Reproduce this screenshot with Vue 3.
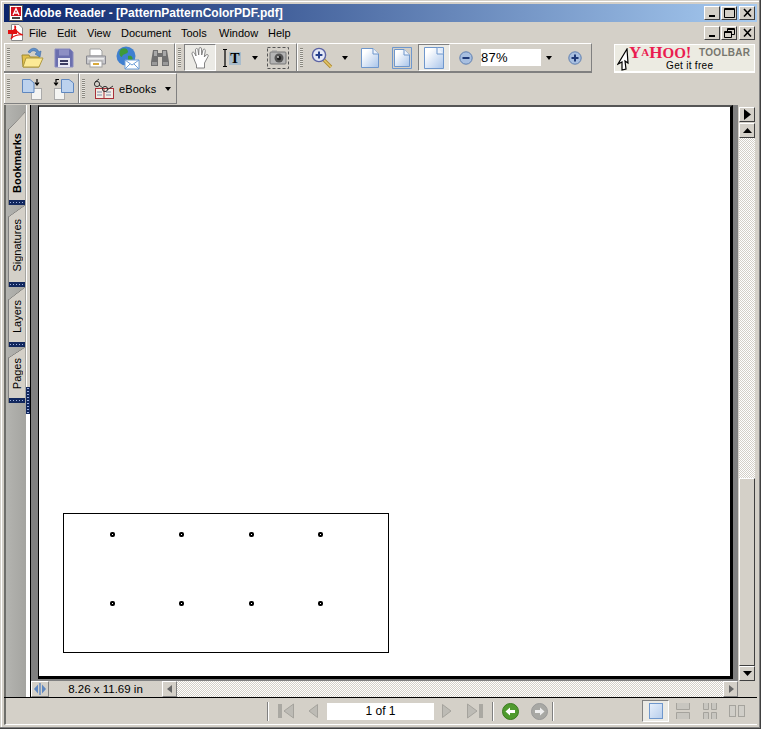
<script setup>
const menus = ['File', 'Edit', 'View', 'Document', 'Tools', 'Window', 'Help']
const tabs = [
  { name: 'Bookmarks', h: 93, cut: 18, pad: 12, bold: true },
  { name: 'Signatures', h: 82, cut: 12, pad: 15 },
  { name: 'Layers', h: 60, cut: 13, pad: 14 },
  { name: 'Pages', h: 56, cut: 11, pad: 14 },
]
const dots = Array.from({ length: 8 }, (_, i) => i)
</script>

<template>
  <div class="window">
    <div class="titlebar">
      <svg class="app-ico" width="16" height="16" viewBox="0 0 16 16"><rect x="1.5" y="0.5" width="13" height="15" fill="#fff" stroke="#555"/><rect x="3" y="2" width="10" height="9" fill="#d0101c"/><path d="M5 10 L8 3.5 L11 10 M6.5 8 H9.5" stroke="#fff" stroke-width="1.3" fill="none"/><rect x="4" y="12" width="8" height="2" fill="#444"/></svg>
      <span class="title-text">Adobe Reader - [PatternPatternColorPDF.pdf]</span>
      <div class="winbtns">
        <span class="wb"><svg width="15" height="14"><rect x="4" y="9" width="6" height="2" fill="#000"/></svg></span>
        <span class="wb"><svg width="15" height="14"><path d="M2.5 2.5 H12.5 V11.5 H2.5 Z M2.5 3.5 H12.5" stroke="#000" fill="none"/></svg></span>
        <span class="wb wb-gap"><svg width="15" height="14"><path d="M4 3 L11 10.5 M11 3 L4 10.5" stroke="#000" stroke-width="1.6"/></svg></span>
      </div>
    </div>

    <div class="menubar">
      <svg class="doc-ico" width="16" height="17" viewBox="0 0 16 17"><path d="M3.5 0.5 H11 L14.5 4 V16.5 H3.5 Z" fill="#fff" stroke="#888"/><path d="M1 8 C6 8 9 3 7 2 C6 5 10 10 15 11 C10 10 5 12 3 15 C5 11 6 8 1 8 Z" fill="none" stroke="#e01010" stroke-width="1.2"/><rect x="0" y="6" width="9" height="4" fill="#e01010"/></svg>
      <span v-for="m in menus" :key="m" class="menu-item">{{ m }}</span>
      <div class="winbtns winbtns-menu">
        <span class="wb"><svg width="15" height="14"><rect x="4" y="9" width="6" height="2" fill="#000"/></svg></span>
        <span class="wb"><svg width="15" height="14"><path d="M5.5 5 V2.5 H12.5 V8.5 H10 M2.5 5.5 H9.5 V11.5 H2.5 Z M2.5 6.5 H9.5 M5.5 3.5 H12.5" stroke="#000" fill="none"/></svg></span>
        <span class="wb wb-gap"><svg width="15" height="14"><path d="M4 3 L11 10.5 M11 3 L4 10.5" stroke="#000" stroke-width="1.6"/></svg></span>
      </div>
    </div>

    <div class="toolrow row1">
      <div class="tgroup g1">
        <i class="grip"></i>
        <span class="tool"><svg width="24" height="24" viewBox="0 0 24 24"><path d="M2 9 H9 L10 11 H19 V21 H3 Z" fill="#e2c04a" stroke="#a08a30"/><path d="M3 21 L6 12 H23 L19 21 Z" fill="#fcea96" stroke="#b09a40"/><path d="M8 6 C11 1 17 1 19 6 L21 5 L20 11 L15 8 L17 7 C15 4 12 4 10 7 Z" fill="#5f8fc8" stroke="#3c6aa4" stroke-width=".6"/></svg></span>
        <span class="tool"><svg width="20" height="20" viewBox="0 0 20 20"><path d="M1 1 H16 L19 4 V19 H1 Z" fill="#6b6fae" stroke="#8a8cc0"/><rect x="5" y="1.5" width="10" height="6" fill="#8d8fc4"/><rect x="4" y="10" width="12" height="9" fill="#e8e8f2"/><rect x="6" y="12" width="8" height="2" fill="#3c3c60"/><rect x="6" y="15" width="8" height="2" fill="#3c3c60"/></svg></span>
        <span class="tool"><svg width="22" height="22" viewBox="0 0 22 22"><path d="M5 9 V2 H15 L17 4 V9 Z" fill="#fff" stroke="#a0a0a0"/><path d="M1.5 9 H20.5 V17 H1.5 Z" fill="#c8c8cc" stroke="#8a8a90"/><rect x="5" y="14" width="12" height="6" fill="#fff" stroke="#a0a0a0"/><rect x="8" y="16" width="6" height="2" fill="#d9a93c"/><rect x="3" y="11" width="16" height="1.5" fill="#eee"/></svg></span>
        <span class="tool"><svg width="24" height="24" viewBox="0 0 24 24"><circle cx="10" cy="10" r="9.5" fill="#3f7fd0"/><path d="M5 3 C9 1 12 3 12 6 C10 9 7 7 6 11 C4 11 2 7 5 3 Z M12 10 C15 9 18 11 16 15 L12 16 Z" fill="#3d9a3a"/><path d="M9 14 H23 V23 H9 Z" fill="#fff" stroke="#6f9fd8"/><path d="M9 14 L16 19 L23 14 M9 23 L14 18 M23 23 L18 18" fill="none" stroke="#6f9fd8"/></svg></span>
        <span class="tool"><svg width="20" height="20" viewBox="0 0 20 20"><path d="M3 2 H8 V5 H12 V2 H17 L19 14 V18 H12 V9 H8 V18 H1 V14 Z" fill="#707070"/><path d="M4 3 H7 V8 H4 Z M13 3 H16 V8 H13 Z" fill="#a8a8a8"/><rect x="2" y="14" width="5" height="3" fill="#9a9a9a"/><rect x="13" y="14" width="5" height="3" fill="#9a9a9a"/></svg></span>
      </div>
      <div class="tgroup g2">
        <i class="grip"></i>
        <span class="tool active"><svg width="20" height="22" viewBox="0 0 20 22"><path d="M4 12 L2 7 C1.5 5 3.5 4.5 4.5 6 L6 9 L5.5 3 C5.5 1 7.8 1 8 3 L8.7 8 L9 1.8 C9.2 0 11.5 0 11.5 2 L11.7 8 L13 3 C13.5 1.5 15.5 2 15.3 3.6 L14.3 10 L16 8 C17.2 6.8 19 8 18 9.5 L14.5 16 V21 H6.5 V18 C5.5 16 4.8 14 4 12 Z" fill="#fff" stroke="#777" stroke-width=".9"/></svg></span>
        <span class="tool"><svg width="20" height="20" viewBox="0 0 20 20"><rect x="7" y="4" width="12" height="13" fill="#a9bccb"/><path d="M1 1.5 H5 M1 18.5 H5 M3 1.5 V18.5" stroke="#000" stroke-width="1.2" fill="none"/><text x="13" y="15" class="ico-t">T</text></svg></span>
        <span class="caret-slot"><i class="caret"></i></span>
        <span class="tool"><svg width="22" height="22" viewBox="0 0 22 22"><rect x=".5" y=".5" width="21" height="21" fill="none" stroke="#555" stroke-dasharray="3 2"/><rect x="3" y="5" width="16" height="12" rx="1" fill="#b4b4b4" stroke="#777"/><rect x="5" y="3.5" width="5" height="2" fill="#999"/><circle cx="12" cy="11" r="4.5" fill="#555"/><circle cx="12" cy="11" r="2.2" fill="#222"/><circle cx="11" cy="10" r=".9" fill="#ddd"/></svg></span>
      </div>
      <div class="tgroup g3">
        <i class="grip"></i>
        <span class="tool"><svg width="22" height="22" viewBox="0 0 22 22"><path d="M12 12 L20 20" stroke="#b08a30" stroke-width="3.4"/><path d="M12 12 L20 20" stroke="#e4c86a" stroke-width="1.6"/><circle cx="8" cy="8" r="6.6" fill="#e4e8f6" stroke="#5b63a4" stroke-width="1.4"/><path d="M4.6 8 H11.4 M8 4.6 V11.4" stroke="#26408c" stroke-width="2"/></svg></span>
        <span class="caret-slot"><i class="caret"></i></span>
        <span class="tool page-first"><svg width="20" height="22" viewBox="0 0 20 22"><defs><linearGradient id="pg" x1="0" y1="0" x2="1" y2="1"><stop offset=".2" stop-color="#fff"/><stop offset="1" stop-color="#a8c4ea"/></linearGradient></defs><path d="M1.5 1.5 H13 L18.5 7 V20.5 H1.5 Z" fill="url(#pg)" stroke="#6f97cc"/><path d="M13 1.5 V7 H18.5" fill="#eef3fb" stroke="#6f97cc"/></svg></span>
        <span class="tool"><svg width="20" height="22" viewBox="0 0 20 22"><path d="M.5 .5 H19.5 V21.5 H.5 Z" fill="none" stroke="#6f97cc"/><path d="M2.5 2.5 H12 L17.5 8 V19.5 H2.5 Z" fill="url(#pg)" stroke="#6f97cc"/><path d="M12 2.5 V8 H17.5" fill="#eef3fb" stroke="#6f97cc"/></svg></span>
        <span class="tool active"><svg width="20" height="22" viewBox="0 0 20 22"><path d="M.5 .5 H19.5 V21.5 H.5 Z" fill="url(#pg)" stroke="#6f97cc"/><path d="M13 .5 V7 H19.5" fill="#eef3fb" stroke="#6f97cc"/></svg></span>
        <span class="zoom-slot"><svg width="14" height="14" viewBox="0 0 14 14"><circle cx="7" cy="7" r="6.2" fill="#a8bfe0" stroke="#5f7fb0"/><rect x="3.5" y="6" width="7" height="2" fill="#1f3a78"/></svg></span>
        <span class="zoom-input">87%</span>
        <span class="caret-slot wide"><i class="caret"></i></span>
        <span class="zoom-slot plus"><svg width="14" height="14" viewBox="0 0 14 14"><circle cx="7" cy="7" r="6.2" fill="#a8bfe0" stroke="#5f7fb0"/><path d="M3.5 7 H10.5 M7 3.5 V10.5" stroke="#1f3a78" stroke-width="2"/></svg></span>
      </div>
      <div class="yahoo">
        <svg class="y-cursor" width="13" height="23" viewBox="0 0 13 23"><path d="M10 1 L11 15 L8 13 L9 21 L5 22 L5 14 L1 16 Z" fill="#fff" stroke="#000" stroke-width="1.2"/></svg>
        <div class="y-text">
          <div class="y-line"><span class="y-logo"><b>Y</b><small>A</small><b>H</b>OO<b>!</b></span><span class="y-tool">TOOLBAR</span></div>
          <div class="y-free">Get it free</div>
        </div>
      </div>
    </div>

    <div class="toolrow row2">
      <div class="tgroup g4">
        <i class="grip"></i>
        <span class="tool"><svg width="22" height="22" viewBox="0 0 22 22"><rect x="10.5" y="10.5" width="10" height="11" fill="#f4f4f2" stroke="#aaa"/><path d="M1.5 1.5 H9 L13 5 V14.5 H1.5 Z" fill="#bcd2ee" stroke="#5f87bf"/><path d="M16 1 V6 M14 4.5 L16 7 L18 4.5" stroke="#000" fill="none" stroke-width="1.2"/></svg></span>
        <span class="tool"><svg width="22" height="22" viewBox="0 0 22 22"><rect x="1.5" y="10.5" width="10" height="11" fill="#f4f4f2" stroke="#aaa"/><path d="M8.5 1.5 H16 L20.5 5 V14.5 H8.5 Z" fill="#bcd2ee" stroke="#5f87bf"/><path d="M6 1.5 H3 V6 M1 4.5 L3 7 L5 4.5" stroke="#000" fill="none" stroke-width="1.2"/></svg></span>
      </div>
      <div class="tgroup g5">
        <i class="grip"></i>
        <span class="tool"><svg width="22" height="22" viewBox="0 0 22 22"><rect x="2.5" y="10.5" width="18" height="10" fill="#f2ece4" stroke="#a83038"/><path d="M11 11 V20" stroke="#a83038"/><path d="M4 14 H9 M4 17 H9 M13 14 H18 M13 17 H18" stroke="#7a8aa8"/><circle cx="4" cy="6" r="2.6" fill="none" stroke="#333"/><circle cx="12" cy="11" r="2.6" fill="none" stroke="#333"/><path d="M6 7 L10 10 M2 4 L6 1 M14 12 L20 8" stroke="#333" fill="none"/></svg></span>
        <span class="ebooks">eBooks</span>
        <span class="caret-slot ebooks-caret"><i class="caret"></i></span>
      </div>
    </div>

    <div class="main">
      <div class="rail">
        <div v-for="t in tabs" :key="t.name" class="tab" :style="{ height: t.h + 'px', paddingBottom: t.pad + 'px', clipPath: `polygon(0 ${t.cut}px, 100% 0, 100% 100%, 0 100%)` }">
          <svg class="tab-slant" width="17" :height="t.cut" :viewBox="`0 0 17 ${t.cut}`"><path :d="`M0 ${t.cut} L17 0`" stroke="#555" fill="none"/></svg>
          <span class="tab-label" :class="{ bold: t.bold }">{{ t.name }}</span>
          <i class="tab-tip"></i>
        </div>
      </div>
      <div class="splitter"><i class="split-top"></i><i class="split-handle"></i><i class="split-rest"></i></div>
      <div class="viewer">
        <div class="viewport">
          <div class="page">
            <div class="figure">
              <i v-for="d in dots" :key="d" class="dot"></i>
            </div>
          </div>
        </div>
        <div class="hscroll">
          <span class="sbtn split"><svg width="14" height="12" viewBox="0 0 14 12"><path d="M5 1.5 V10.5 L1 6 Z M9 1.5 V10.5 L13 6 Z" fill="#5f87bf"/><path d="M7 0 V12" stroke="#5f87bf" stroke-width="1.4"/></svg></span>
          <span class="readout">8.26 x 11.69 in</span>
          <span class="sbtn arrow"><svg width="8" height="10" viewBox="0 0 8 10"><path d="M6 1 V9 L1 5 Z" fill="#666"/></svg></span>
          <span class="dither"></span>
          <span class="sbtn arrow"><svg width="8" height="10" viewBox="0 0 8 10"><path d="M2 1 V9 L7 5 Z" fill="#666"/></svg></span>
        </div>
      </div>
      <div class="vscroll">
        <span class="vbtn first"><svg width="9" height="11" viewBox="0 0 9 11"><path d="M1 0 V11 L8 5.5 Z" fill="#000"/></svg></span>
        <span class="vbtn"><svg width="9" height="6" viewBox="0 0 9 6"><path d="M0 5 H9 L4.5 0 Z" fill="#000"/></svg></span>
        <span class="vtrack"></span>
        <span class="vthumb"></span>
        <span class="vbtn"><svg width="9" height="6" viewBox="0 0 9 6"><path d="M0 0 H9 L4.5 5 Z" fill="#000"/></svg></span>
      </div>
    </div>

    <div class="status">
      <i class="sep first-sep"></i>
      <span class="nav n1"><svg width="16" height="16" viewBox="0 0 16 16"><rect x="0" y="1" width="4" height="14" fill="#aaa8a2"/><path d="M15.5 1 V15 L6 8 Z" fill="#bdbbb5" stroke="#a5a39d"/></svg></span>
      <span class="nav n2"><svg width="10" height="14" viewBox="0 0 10 14"><path d="M9.5 0.5 V13.5 L1 7 Z" fill="#bdbbb5" stroke="#a5a39d"/></svg></span>
      <span class="page-input">1 of 1</span>
      <span class="nav n3"><svg width="10" height="14" viewBox="0 0 10 14"><path d="M0.5 0.5 V13.5 L9 7 Z" fill="#bdbbb5" stroke="#a5a39d"/></svg></span>
      <span class="nav n4"><svg width="16" height="16" viewBox="0 0 16 16"><rect x="12" y="1" width="4" height="14" fill="#aaa8a2"/><path d="M0.5 1 V15 L10 8 Z" fill="#bdbbb5" stroke="#a5a39d"/></svg></span>
      <i class="sep s2"></i>
      <span class="nav n5"><svg width="17" height="17" viewBox="0 0 17 17"><circle cx="8.5" cy="8.5" r="8" fill="#4f9a2e" stroke="#3a7a20"/><path d="M3.5 8.5 L8 4.5 V7 H13 V10 H8 V12.5 Z" fill="#fff"/></svg></span>
      <span class="nav n6"><svg width="17" height="17" viewBox="0 0 17 17"><circle cx="8.5" cy="8.5" r="8" fill="#a8a8a4" stroke="#999"/><path d="M13.5 8.5 L9 4.5 V7 H4 V10 H9 V12.5 Z" fill="#eee"/></svg></span>
      <i class="sep s3"></i>
      <span class="view-btn active"><svg width="14" height="16" viewBox="0 0 14 16"><defs><linearGradient id="vb" x1="0" y1="0" x2="1" y2="1"><stop offset="0" stop-color="#e8f0fb"/><stop offset="1" stop-color="#b6cdec"/></linearGradient></defs><rect x=".5" y=".5" width="13" height="15" fill="url(#vb)" stroke="#6f97cc"/></svg></span>
      <span class="view-btn"><svg width="14" height="16" viewBox="0 0 14 16"><path d="M.5 0 V6.5 H13.5 V0 M.5 16 V9.5 H13.5 V16" fill="#c8c6c0" stroke="#a5a39d"/></svg></span>
      <span class="view-btn"><svg width="14" height="16" viewBox="0 0 14 16"><path d="M.5 0 V6.5 H5.5 V0 M8.5 0 V6.5 H13.5 V0 M.5 16 V9.5 H5.5 V16 M8.5 16 V9.5 H13.5 V16" fill="#c8c6c0" stroke="#a5a39d"/></svg></span>
      <span class="view-btn"><svg width="16" height="12" viewBox="0 0 16 12"><rect x=".5" y=".5" width="6" height="11" fill="#d0cec8" stroke="#a5a39d"/><rect x="9.5" y=".5" width="6" height="11" fill="#d0cec8" stroke="#a5a39d"/></svg></span>
    </div>
  </div>
</template>

<style scoped>
.window {
  box-sizing: border-box;
  width: 761px;
  height: 729px;
  padding: 4px 3px 2px 4px;
  background: #d4d0c8;
  display: flex;
  flex-direction: column;
  font-family: "Liberation Sans", Arial, sans-serif;
  font-size: 11px;
  color: #000;
  border-right: 1px solid #404040;
  border-bottom: 1px solid #404040;
  box-shadow: inset -1px -1px 0 #808080, inset 1px 1px 0 #d4d0c8, inset 2px 2px 0 #fff;
  overflow: hidden;
}
.titlebar {
  flex: 0 0 18px;
  display: flex;
  align-items: center;
  background: linear-gradient(90deg, #0a246a, #a6caf0);
  padding-left: 4px;
}
.app-ico { flex: none; }
.title-text {
  color: #fff;
  font-weight: 700;
  font-size: 12px;
  white-space: nowrap;
}
.winbtns { margin-left: auto; display: flex; gap: 1px; padding-right: 2px; }
.wb {
  box-sizing: border-box;
  width: 16px;
  height: 14px;
  display: flex;
  align-items: center;
  justify-content: center;
  background: #d4d0c8;
  border: 1px solid;
  border-color: #fff #404040 #404040 #fff;
}
.wb svg { flex: none; margin: -1px; }
.wb-gap { margin-left: 1px; }

.menubar {
  flex: 0 0 21px;
  display: flex;
  align-items: center;
}
.doc-ico { flex: none; margin-left: 4px; margin-right: 5px; }
.menu-item { font-size: 11px; }
.menu-item:nth-of-type(1) { width: 28px; }
.menu-item:nth-of-type(2) { width: 30px; }
.menu-item:nth-of-type(3) { width: 34px; }
.menu-item:nth-of-type(4) { width: 60px; }
.menu-item:nth-of-type(5) { width: 38px; }
.menu-item:nth-of-type(6) { width: 49px; }

.toolrow { display: flex; }
.row1 { flex: 0 0 30px; }
.row2 { flex: 0 0 32px; }
.tgroup {
  box-sizing: border-box;
  display: flex;
  align-items: center;
  height: 100%;
  border-top: 1px solid #fff;
  border-bottom: 2px solid #808080;
  border-right: 1px solid #808080;
  box-shadow: inset 1px 0 0 #fff;
  padding-left: 3px;
}
.row2 .tgroup { border-bottom-width: 1px; height: 31px; }
.g1 { width: 171px; }
.g2 { width: 122px; }
.g3 { width: 295px; }
.g4 { width: 75px; }
.g5 { width: 98px; }
.grip {
  flex: none;
  width: 3px;
  height: 19px;
  margin-right: 6px;
  background: repeating-linear-gradient(180deg, #8a8880 0 1px, #e8e6e0 1px 2px);
}
.g2 .grip, .g3 .grip, .g5 .grip { margin-right: 3px; }
.tool {
  box-sizing: border-box;
  flex: none;
  width: 32px;
  height: 27px;
  display: flex;
  align-items: center;
  justify-content: center;
}
.tool.page-first { margin-left: 2px; }
.tool.active {
  background: #ebeae5;
  border: 1px solid;
  border-color: #808080 #fff #fff #808080;
}
.caret-slot {
  flex: none;
  width: 14px;
  display: flex;
  justify-content: center;
  align-items: center;
}
.caret-slot.wide { width: 16px; }
.caret {
  width: 0;
  height: 0;
  border-left: 3.5px solid transparent;
  border-right: 3.5px solid transparent;
  border-top: 4px solid #000;
}
.zoom-slot {
  flex: none;
  width: 31px;
  display: flex;
  justify-content: center;
  align-items: center;
}
.zoom-slot.plus { margin-left: 2px; }
.zoom-input {
  flex: none;
  width: 60px;
  height: 17px;
  line-height: 17px;
  background: #fff;
  font-size: 13px;
  letter-spacing: .3px;
}
.ico-t {
  font-family: "Liberation Serif", serif;
  font-weight: 700;
  font-size: 14px;
  text-anchor: middle;
  fill: #000;
}
.ebooks { flex: none; width: 40px; font-size: 11px; letter-spacing: .1px; margin-left: -1px; }
.ebooks-caret { margin-left: 2px; }

.yahoo {
  box-sizing: border-box;
  margin-left: 22px;
  width: 141px;
  height: 29px;
  margin-top: 1px;
  background: #ecebe2;
  border: 1px solid #fff;
  border-width: 1px 1px 2px 1px;
  display: flex;
  align-items: center;
}
.y-cursor { flex: none; margin-left: 2px; margin-top: 3px; }
.y-text { margin-left: -1px; }
.y-line { display: flex; align-items: center; height: 14px; line-height: 14px; }
.y-logo {
  font-family: "Liberation Serif", serif;
  font-size: 15px;
  font-weight: 700;
  color: #ea1c50;
  width: 70px;
  white-space: nowrap;
}
.y-logo b { font-size: 17px; }
.y-logo small { font-size: 11px; vertical-align: 2px; }
.y-tool {
  font-size: 10px;
  font-weight: 700;
  color: #77776f;
  letter-spacing: .3px;
  white-space: nowrap;
}
.y-free {
  font-size: 10px;
  line-height: 11px;
  text-align: center;
  letter-spacing: .3px;
  white-space: nowrap;
}

.main {
  box-sizing: border-box;
  flex: 0 0 593px;
  display: flex;
  min-height: 0;
  border-bottom: 1px solid #000;
}
.rail {
  box-sizing: border-box;
  width: 22px;
  border-left: 2px solid #6e6e6a;
  background: linear-gradient(90deg, #b4b4b0, #a4a4a0);
  padding: 7px 0 0 2px;
  display: flex;
  flex-direction: column;
}
.tab {
  box-sizing: border-box;
  position: relative;
  flex: none;
  width: 17px;
  background: #d4d0c8;
  display: flex;
  flex-direction: column;
  justify-content: flex-end;
  align-items: center;
  border-left: 1px solid #808080;
}
.tab-slant { position: absolute; left: -1px; top: 0; }
.tab-label {
  writing-mode: vertical-rl;
  transform: rotate(180deg);
  font-size: 11px;
  white-space: nowrap;
}
.tab-label.bold { font-weight: 700; }
.tab-tip {
  position: absolute;
  left: 0;
  right: 0;
  bottom: 0;
  height: 5px;
  background: radial-gradient(circle, #9fb2e0 .6px, transparent .8px) 0 0 / 3px 5px, #12285e;
}
.splitter {
  flex: none;
  width: 5px;
  border-right: 1px solid #000;
  box-sizing: border-box;
  display: flex;
  flex-direction: column;
}
.split-top { flex: 0 0 282px; background: #d4d0c8; box-shadow: inset 1px 0 0 #fff; }
.split-handle { flex: 0 0 27px; background: radial-gradient(circle, #9fb2e0 .6px, transparent .8px) 0 0 / 4px 3px, #12285e; }
.split-rest { flex: 1; background: #fff; }
.viewer {
  flex: none;
  width: 707px;
  display: flex;
  flex-direction: column;
}
.viewport {
  box-sizing: border-box;
  flex: 0 0 576px;
  background: #808080;
  padding: 0 5px 2px 7px;
  display: flex;
}
.page {
  box-sizing: border-box;
  flex: 1;
  background: #fff;
  border: solid #000;
  border-width: 2px 3px 3px 1px;
  border-top-color: #555;
  padding: 0 0 23px 24px;
  display: flex;
  align-items: flex-end;
}
.figure {
  box-sizing: border-box;
  width: 326px;
  height: 140px;
  border: 1px solid #000;
  padding: 18px 0 0 46px;
  display: grid;
  grid-template-columns: repeat(4, 69.4px);
  grid-template-rows: repeat(2, 69px);
  align-content: start;
}
.dot {
  box-sizing: border-box;
  width: 5px;
  height: 5px;
  border: 2px solid #000;
  border-radius: 2px;
  background: #fff;
}
.hscroll {
  flex: 0 0 16px;
  display: flex;
  background: #d4d0c8;
}
.sbtn {
  box-sizing: border-box;
  flex: none;
  width: 15px;
  height: 16px;
  display: flex;
  align-items: center;
  justify-content: center;
  background: #d4d0c8;
  border: 1px solid;
  border-color: #fff #808080 #808080 #fff;
}
.sbtn.split { width: 18px; }
.readout {
  flex: none;
  width: 113px;
  line-height: 16px;
  font-size: 11.5px;
  text-align: center;
}
.dither, .vtrack {
  flex: 1;
  background: repeating-conic-gradient(#d4d0c8 0 25%, #fff 0 50%) 0 0 / 2px 2px;
}
.vscroll {
  box-sizing: border-box;
  flex: none;
  width: 19px;
  padding: 2px 2px 0 1px;
  height: 576px;
  display: flex;
  flex-direction: column;
}
.vbtn {
  box-sizing: border-box;
  flex: none;
  height: 15px;
  display: flex;
  align-items: center;
  justify-content: center;
  background: #d4d0c8;
  border: 1px solid;
  border-color: #fff #404040 #404040 #fff;
}
.vbtn.first { margin-bottom: 1px; }
.vtrack { flex: 1; }
.vthumb {
  box-sizing: border-box;
  flex: 0 0 188px;
  background: #d4d0c8;
  border: 1px solid;
  border-color: #fff #404040 #404040 #fff;
}

.status {
  box-sizing: border-box;
  flex: 0 0 27px;
  display: flex;
  align-items: center;
  border-left: 2px solid #6e6e6a;
  border-bottom: 1px solid #fff;
}
.sep {
  flex: none;
  width: 2px;
  height: 19px;
  background: linear-gradient(90deg, #808080 50%, #fff 50%);
}
.first-sep { margin-left: 261px; }
.nav { flex: none; display: flex; justify-content: center; align-items: center; }
.n1 { width: 34px; }
.n2 { width: 20px; }
.n3 { width: 26px; }
.n4 { width: 30px; }
.n5 { width: 33px; }
.n6 { width: 24px; }
.s2 { margin-left: 2px; }
.s3 { margin-left: 1px; margin-right: 88px; }
.page-input {
  flex: none;
  width: 107px;
  height: 17px;
  line-height: 17px;
  margin-left: 4px;
  background: #fff;
  text-align: center;
  font-size: 12px;
}
.view-btn {
  box-sizing: border-box;
  flex: none;
  width: 27px;
  height: 22px;
  display: flex;
  align-items: center;
  justify-content: center;
}
.view-btn.active {
  background: #ebeae5;
  border: 1px solid;
  border-color: #808080 #fff #fff #808080;
}
</style>
